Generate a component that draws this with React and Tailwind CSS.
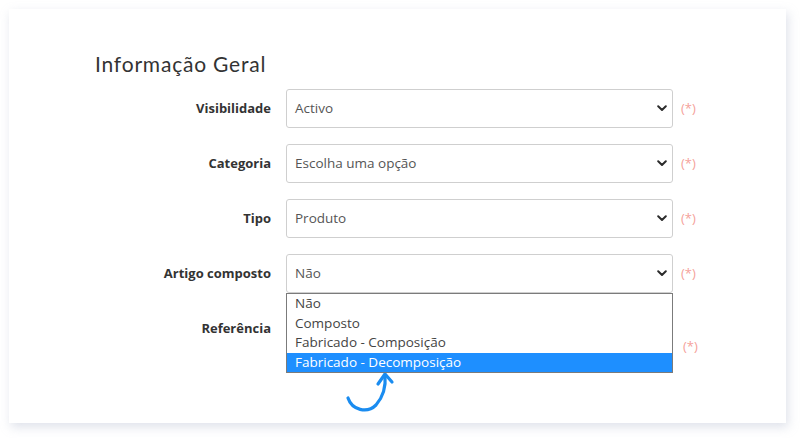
import React from 'react';

const fields = [
  { label: 'Visibilidade', value: 'Activo' },
  { label: 'Categoria', value: 'Escolha uma opção' },
  { label: 'Tipo', value: 'Produto' },
  { label: 'Artigo composto', value: 'Não', open: true },
];

const options = ['Não', 'Composto', 'Fabricado - Composição', 'Fabricado - Decomposição'];

function Chevron() {
  return (
    <svg width="10" height="7" viewBox="0 0 10 7" className="shrink-0">
      <path d="M1.2 1.3 L5 5 L8.8 1.3" fill="none" stroke="#2b2b2b" strokeWidth="2" strokeLinecap="round" strokeLinejoin="round" />
    </svg>
  );
}

function Required({ className = '' }) {
  return <span className={`text-[13px] text-[#f5a19a] ${className}`}>(*)</span>;
}

function SelectBox({ value, open }) {
  return (
    <div className="relative">
      <div className="flex h-[39px] items-center justify-between rounded-[3px] border border-[#cfcfcf] bg-white pl-[8px] pr-[5px] text-[13.5px] text-[#555]">
        <span>{value}</span>
        <Chevron />
      </div>
      {open && (
        <div className="absolute left-0 right-0 top-[39px] z-10 border border-[#7b7b7b] bg-white text-[13.5px] leading-[19.5px] text-[#444]">
          {options.map((o, i) => (
            <div
              key={o}
              className={`pl-[8px] ${i === options.length - 1 ? 'bg-[#1e8fff] text-white' : ''}`}
            >
              {o}
            </div>
          ))}
        </div>
      )}
    </div>
  );
}

export default function App() {
  return (
    <div className="h-[438px] w-[800px] bg-white p-[9px]" style={{ fontFamily: '"Open Sans", "Noto Sans", sans-serif' }}>
      <div className="relative h-[414px] w-[777px] bg-white pt-[41px] shadow-[2px_4px_10px_rgba(160,170,195,0.35)]">
        <h2 className="pl-[86px] text-[21px] leading-[28px] tracking-[0.8px] text-[#333]" style={{ fontFamily: 'Lato, Inter, sans-serif' }}>
          Informação Geral
        </h2>

        <div className="mt-[11px] grid grid-cols-[262px_387px_auto] items-center gap-x-[15px] gap-y-[16px]">
          {fields.map((f) => (
            <React.Fragment key={f.label}>
              <label className="justify-self-end text-[13px] font-bold text-[#333]">{f.label}</label>
              <SelectBox value={f.value} open={f.open} />
              <Required className="-ml-[7px]" />
            </React.Fragment>
          ))}
          <label className="justify-self-end text-[13px] font-bold text-[#333]">Referência</label>
          <div className="h-[39px] rounded-[3px] border border-[#cfcfcf]" />
          <Required className="-ml-[5px] translate-y-[18px]" />
        </div>

        <svg className="absolute left-[327px] top-[351px]" width="60" height="56" viewBox="336 360 60 56">
          <path d="M348 398 C352 410 367 414 376 405 C383 397 386 386 385 375" fill="none" stroke="#1a8cf0" strokeWidth="3.2" strokeLinecap="round" />
          <path d="M378 384 L385 374 L392 382" fill="none" stroke="#1a8cf0" strokeWidth="3.2" strokeLinecap="round" strokeLinejoin="round" />
        </svg>
      </div>
    </div>
  );
}
